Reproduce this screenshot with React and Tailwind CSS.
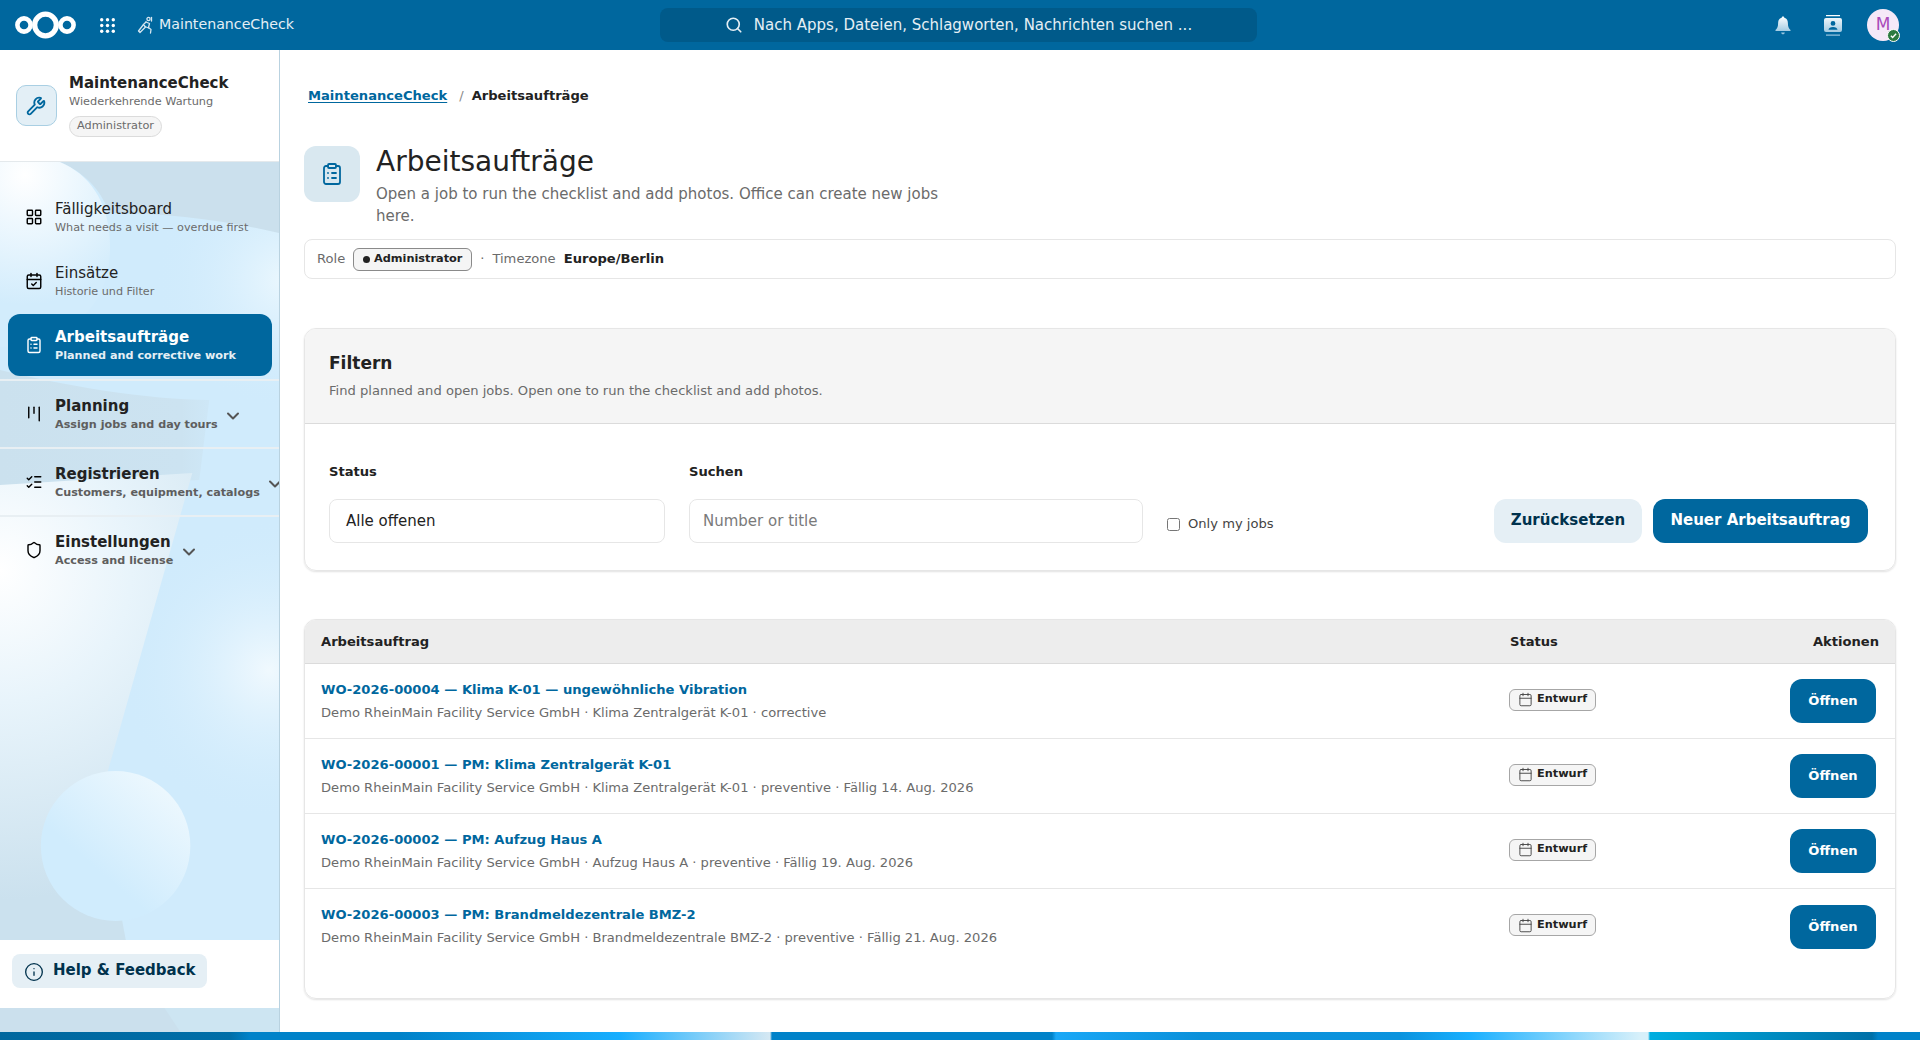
import { Calendar, CalendarCheck, ChevronDown, ClipboardList, Info, Kanban, LayoutGrid, ListChecks, Search, Shield, Wrench } from "lucide-react";

const rows = [
  { title: "WO-2026-00004 — Klima K-01 — ungewöhnliche Vibration", sub: "Demo RheinMain Facility Service GmbH · Klima Zentralgerät K-01 · corrective" },
  { title: "WO-2026-00001 — PM: Klima Zentralgerät K-01", sub: "Demo RheinMain Facility Service GmbH · Klima Zentralgerät K-01 · preventive · Fällig 14. Aug. 2026" },
  { title: "WO-2026-00002 — PM: Aufzug Haus A", sub: "Demo RheinMain Facility Service GmbH · Aufzug Haus A · preventive · Fällig 19. Aug. 2026" },
  { title: "WO-2026-00003 — PM: Brandmeldezentrale BMZ-2", sub: "Demo RheinMain Facility Service GmbH · Brandmeldezentrale BMZ-2 · preventive · Fällig 21. Aug. 2026" },
];

const Logo = () => (
  <svg width="62" height="28" viewBox="0 0 62 28" fill="none" stroke="white">
    <circle cx="9" cy="14" r="6.6" strokeWidth="4.6" />
    <circle cx="30.5" cy="14" r="10.8" strokeWidth="5.2" />
    <circle cx="52" cy="14" r="6.6" strokeWidth="4.6" />
  </svg>
);

const AppsGrid = () => (
  <svg width="15" height="15" viewBox="0 0 15 15" fill="white">
    {[1.7, 7.5, 13.3].map((y) =>
      [1.7, 7.5, 13.3].map((x) => <circle key={`${x}-${y}`} cx={x} cy={y} r="1.7" />)
    )}
  </svg>
);

const AppIcon = () => (
  <svg width="16" height="18" viewBox="0 0 16 18" fill="none" stroke="#d5e6f0" strokeWidth="1.3" strokeLinecap="round" strokeLinejoin="round">
    <circle cx="11.5" cy="3" r="1.6" />
    <path d="M14.5 1.5v3.5" />
    <path d="M9 6l3.5 1.5-1 4 2.5 2-.5 3.5" />
    <path d="M9 6l-2.5 2.5 1.5 2 3.5 1.5" />
    <path d="M6.5 8.5l-5 6.5 1.5 1.5 5.5-5.5" />
  </svg>
);

const Bell = () => (
  <svg width="18" height="19" viewBox="0 0 18 19">
    <defs>
      <linearGradient id="fadeBell" x1="0" y1="0" x2="0" y2="1">
        <stop offset="0" stopColor="#ffffff" />
        <stop offset="1" stopColor="#8fc0dc" />
      </linearGradient>
    </defs>
    <path fill="url(#fadeBell)" d="M9 0.5c.8 0 1.3.5 1.3 1.2 2.7.6 3.6 3 3.6 5.6 0 3.2.8 5.2 2.6 6.7v1H1.500v-1c1.800-1.500 2.600-3.500 2.600-6.700 0-2.600.9-5 3.600-5.600C7.700 1 8.200.5 9 .5zM7.200 16.500h3.600c0 1-.8 1.800-1.800 1.800s-1.800-.8-1.800-1.800z" />
  </svg>
);

const Contacts = () => (
  <svg width="18" height="21" viewBox="0 0 18 21">
    <defs>
      <linearGradient id="fadeCard" x1="0" y1="0" x2="0" y2="1">
        <stop offset="0" stopColor="#ffffff" />
        <stop offset="1" stopColor="#8fc0dc" />
      </linearGradient>
    </defs>
    <path fill="url(#fadeCard)" fillRule="evenodd" d="M2 0h14v1.300H2zM2 19.500h14v1.300H2zM2 3h14a2 2 0 0 1 2 2v10a2 2 0 0 1-2 2H2a2 2 0 0 1-2-2V5a2 2 0 0 1 2-2zm7 3a2.400 2.400 0 1 0 0 4.800A2.400 2.400 0 0 0 9 6zm-4.500 8.800h9c0-1.800-2-2.900-4.500-2.900s-4.500 1.100-4.500 2.900z" />
  </svg>
);

const SidebarArt = () => (
  <svg className="absolute inset-0 w-full h-full" viewBox="0 0 280 982" preserveAspectRatio="none" aria-hidden="true">
    <defs>
      <radialGradient id="glowTop" gradientUnits="userSpaceOnUse" cx="25" cy="125" r="130">
        <stop offset="0" stopColor="#ffffff" />
        <stop offset="1" stopColor="#d2ecfc" />
      </radialGradient>
      <radialGradient id="glowRight" gradientUnits="userSpaceOnUse" cx="270" cy="620" r="150">
        <stop offset="0" stopColor="#f0f9fe" />
        <stop offset="1" stopColor="#d0ebfc" stopOpacity="0" />
      </radialGradient>
      <radialGradient id="glowRightUp" gradientUnits="userSpaceOnUse" cx="285" cy="230" r="130">
        <stop offset="0" stopColor="#eaf7fe" />
        <stop offset="1" stopColor="#d0ebfc" stopOpacity="0" />
      </radialGradient>
      <radialGradient id="sheet" gradientUnits="userSpaceOnUse" cx="0" cy="520" r="330">
        <stop offset="0" stopColor="#ffffff" />
        <stop offset="0.4" stopColor="#e8f4fb" />
        <stop offset="1" stopColor="#cbe1ee" />
      </radialGradient>
      <linearGradient id="sphere" gradientUnits="userSpaceOnUse" x1="60" y1="860" x2="180" y2="720">
        <stop offset="0.3" stopColor="#d0ecfd" />
        <stop offset="1" stopColor="#f2fafe" />
      </linearGradient>
      <linearGradient id="band" gradientUnits="userSpaceOnUse" x1="0" y1="0" x2="280" y2="0">
        <stop offset="0" stopColor="#cbe1ee" />
        <stop offset="0.65" stopColor="#cce3f1" />
        <stop offset="1" stopColor="#d0ecfc" stopOpacity="0" />
      </linearGradient>
    </defs>
    <rect width="280" height="982" fill="#d0ebfc" />
    <rect width="280" height="982" fill="url(#glowRight)" />
    <rect width="280" height="982" fill="url(#glowRightUp)" />
    <path d="M0 112h280v71c-50-12-110-20-170-20-10-25-25-40-50-51H0z" fill="#cbe0ed" />
    <path d="M0 112h60c30 12 48 40 50 75 3 40-10 70-40 90-25 15-50 20-70 20z" fill="url(#glowTop)" />
    <path d="M0 320c60 15 150 30 210 30l-10 80-200 10z" fill="url(#band)" />
    <path d="M0 435l193-12-93 327 30 160H0z" fill="url(#sheet)" />
    <circle cx="116" cy="796" r="75" fill="url(#sphere)" />
    <path d="M0 880h118l62 102H0z" fill="#cbe1ee" />
    <rect y="958" width="280" height="24" fill="#cde5f2" />
    <path d="M0 958h165l16 24H0z" fill="#cbe0ed" />
  </svg>
);

const NavItem = ({ icon: Icon, title, sub, active, strong, chevron, className = "" }) => (
  <div
    className={`flex items-center ${active ? "bg-[#00679e] text-white rounded-[12px] mx-2 w-[264px] pl-[17px] font-bold" : "pl-[25px]"} ${className}`}
  >
    <Icon size={18} strokeWidth={1.9} className="shrink-0" />
    <div className="flex flex-col ml-[12px] shrink-0">
      <span className={`text-[15px] leading-[20px] ${strong || active ? "font-bold" : "text-[#222222]"} ${strong ? "text-[#222222]" : ""}`}>{title}</span>
      <span className={`text-[11.2px] leading-[15px] mt-[1px] whitespace-nowrap ${active ? "text-[#e5eff5] font-bold" : strong ? "text-[#5e5e5e] font-bold" : "text-[#6b6b6b]"}`}>{sub}</span>
    </div>
    {chevron && <ChevronDown size={20} strokeWidth={2.4} className={`shrink-0 mt-[4px] text-[#555555] ${chevron}`} />}
  </div>
);

const Sidebar = () => (
  <aside className="relative w-[280px] shrink-0 flex flex-col border-r border-[#b9d2e0] overflow-hidden">
    <SidebarArt />
    <div className="relative z-10 h-[112px] bg-white flex items-start pl-[16px] pt-[23px] border-b border-[#e4e9ec]">
      <div className="w-[41px] h-[41px] mt-[12px] rounded-[10px] bg-[#e3eff6] border border-[#a9cfe3] flex items-center justify-center text-[#00679e]">
        <Wrench size={20} strokeWidth={2.2} className="-ml-[1px]" />
      </div>
      <div className="ml-[12px] flex flex-col items-start">
        <span className="text-[15px] leading-[20px] font-bold text-[#222222]">MaintenanceCheck</span>
        <span className="text-[11.3px] leading-[16px] mt-[1px] text-[#6b6b6b]">Wiederkehrende Wartung</span>
        <span className="mt-[6px] h-[21px] px-[7px] flex items-center rounded-full bg-[#f5f5f5] border border-[#dbdbdb] text-[11.3px] text-[#6b6b6b]">Administrator</span>
      </div>
    </div>
    <div className="relative z-10 flex-1 flex flex-col pt-[23px]">
      <NavItem icon={LayoutGrid} title="Fälligkeitsboard" sub="What needs a visit — overdue first" className="h-[62px] mt-[1px]" />
      <NavItem icon={CalendarCheck} title="Einsätze" sub="Historie und Filter" className="h-[62px] mt-[2px]" />
      <NavItem icon={ClipboardList} active title="Arbeitsaufträge" sub="Planned and corrective work" className="h-[62px] mt-[2px]" />
      <div className="h-[2px] mt-[3px] bg-[#e8eff3]" />
      <NavItem icon={Kanban} strong title="Planning" sub="Assign jobs and day tours" chevron="ml-[5px]" className="h-[66px]" />
      <div className="h-[2px] bg-[#e8eff3]" />
      <NavItem icon={ListChecks} strong title="Registrieren" sub="Customers, equipment, catalogs" chevron="ml-[5px]" className="h-[66px]" />
      <div className="h-[2px] bg-[#e8eff3]" />
      <NavItem icon={Shield} strong title="Einstellungen" sub="Access and license" chevron="ml-[6px]" className="h-[66px]" />
    </div>
    <div className="relative z-10 h-[68px] mb-[24px] bg-white pt-[14px] pl-[12px]">
      <div className="w-[195px] h-[34px] rounded-[8px] bg-[#e5eff5] flex items-center pl-[12px] text-[#00324d]">
        <Info size={20} strokeWidth={1.6} className="mt-[2px]" />
        <span className="ml-[9px] text-[15px] font-bold -mt-[2px]">Help &amp; Feedback</span>
      </div>
    </div>
  </aside>
);

const Topbar = () => (
  <header className="h-[50px] shrink-0 bg-[#00679e] flex items-center relative text-white">
    <div className="ml-[15px]"><Logo /></div>
    <div className="ml-[23px]"><AppsGrid /></div>
    <div className="ml-[22px]"><AppIcon /></div>
    <span className="ml-[6px] text-[14.2px] text-[#e5eff5]">MaintenanceCheck</span>
    <div className="absolute left-[660px] top-[8px] w-[597px] h-[34px] rounded-[8px] bg-[#005a8a] flex items-center justify-center text-[#e5eff5]">
      <Search size={18} strokeWidth={2.2} />
      <span className="ml-[11px] text-[15px]">Nach Apps, Dateien, Schlagworten, Nachrichten suchen ...</span>
    </div>
    <div className="ml-auto flex items-center mr-[21px]">
      <Bell />
      <div className="ml-[32px]"><Contacts /></div>
      <div className="ml-[25px] relative w-[32px] h-[32px] rounded-full bg-[#f5e9f8] flex items-center justify-center text-[#a94bba] text-[17px]">
        M
        <span className="absolute -right-[1px] -bottom-[1px] w-[13px] h-[13px] rounded-full bg-[#2d7b41] border border-white flex items-center justify-center">
          <svg width="7" height="7" viewBox="0 0 8 8" fill="none" stroke="white" strokeWidth="1.6"><path d="M1 4.300l2 2 4-4.300" /></svg>
        </span>
      </div>
    </div>
  </header>
);

const StatusBadge = () => (
  <span className="inline-flex items-center mt-[1px] w-[87px] h-[22px] rounded-[6px] border border-[#a6a6a6] bg-[#f5f5f5] pl-[8px] text-[#222222]">
    <Calendar size={15} strokeWidth={1.5} className="shrink-0 text-[#444444]" />
    <span className="ml-[4px] text-[11.3px] font-bold">Entwurf</span>
  </span>
);

const Filters = () => (
  <section className="mt-[49px] rounded-[12px] border border-[#e6e6e6] shadow-[0_1px_2px_rgba(0,0,0,0.12)] overflow-hidden">
    <div className="h-[95px] bg-[#f5f5f5] border-b border-[#dbdbdb] pl-[24px] pt-[21px]">
      <h2 className="text-[17px] leading-[26px] font-bold text-[#222222]">Filtern</h2>
      <p className="mt-[6px] text-[13.1px] leading-[18px] text-[#6b6b6b]">Find planned and open jobs. Open one to run the checklist and add photos.</p>
    </div>
    <div className="h-[146px] flex items-start pl-[24px] pr-[27px] pt-[39px]">
      <div className="w-[336px]">
        <label className="block text-[13.1px] leading-[18px] font-bold text-[#222222]">Status</label>
        <div className="mt-[18px] h-[44px] rounded-[8px] border border-[#e6e6e6] flex items-center pl-[16px] text-[15px] text-[#222222]">Alle offenen</div>
      </div>
      <div className="ml-[24px] w-[454px]">
        <label className="block text-[13.1px] leading-[18px] font-bold text-[#222222]">Suchen</label>
        <div className="mt-[18px] h-[44px] rounded-[8px] border border-[#e6e6e6] flex items-center pl-[13px] text-[15px] text-[#7a7a7a]">Number or title</div>
      </div>
      <label className="ml-[24px] mt-[49px] flex items-center h-[24px]">
        <input type="checkbox" className="w-[13px] h-[13px] m-0" />
        <span className="ml-[8px] text-[13.1px] text-[#444444]">Only my jobs</span>
      </label>
      <button className="ml-auto mt-[36px] w-[148px] h-[44px] rounded-[12px] bg-[#e5eff5] text-[#00324d] text-[15px] font-bold pb-[1px]">Zurücksetzen</button>
      <button className="ml-[11px] mt-[36px] w-[215px] h-[44px] rounded-[12px] bg-[#00679e] text-white text-[15px] font-bold pb-[1px]">Neuer Arbeitsauftrag</button>
    </div>
  </section>
);

const JobsTable = () => (
  <section className="mt-[48px] h-[380px] rounded-[12px] border border-[#e6e6e6] shadow-[0_1px_2px_rgba(0,0,0,0.12)] overflow-hidden">
    <div className="h-[44px] bg-[#ededed] border-b border-[#dbdbdb] grid grid-cols-[1fr_185px_184px] items-center px-[16px] text-[13.1px] font-bold text-[#222222]">
      <span>Arbeitsauftrag</span>
      <span>Status</span>
      <span className="text-right">Aktionen</span>
    </div>
    {rows.map((row, i) => (
      <div key={row.title} className={`h-[75px] grid grid-cols-[1fr_185px_184px] items-center px-[16px] ${i < 3 ? "border-b border-[#e6e6e6]" : ""}`}>
        <div>
          <div className="text-[13.1px] leading-[18px] font-bold text-[#00679e]">{row.title}</div>
          <div className="mt-[5px] text-[13.1px] leading-[18px] text-[#6b6b6b]">{row.sub}</div>
        </div>
        <div className="-ml-[1px]"><StatusBadge /></div>
        <div className="flex justify-end pr-[3px]">
          <button className="w-[86px] h-[44px] rounded-[12px] bg-[#00679e] text-white text-[13.1px] font-bold">Öffnen</button>
        </div>
      </div>
    ))}
  </section>
);

export default function App() {
  return (
    <div className="h-screen flex flex-col overflow-hidden bg-white font-['DejaVu_Sans',sans-serif]">
      <Topbar />
      <div className="flex-1 flex min-h-0">
        <Sidebar />
        <main className="flex-1 pl-[24px] pr-[24px] pt-[37px] min-w-0">
          <nav className="flex items-center h-[18px] pl-[4px] text-[13.1px] font-bold">
            <a className="text-[#00679e] underline underline-offset-2" href="#">MaintenanceCheck</a>
            <span className="ml-[12px] font-normal text-[#8a8a8a]">/</span>
            <span className="ml-[8px] text-[#222222]">Arbeitsaufträge</span>
          </nav>
          <div className="mt-[41px] flex items-start">
            <div className="w-[56px] h-[56px] rounded-[12px] bg-[#d9e8f0] flex items-center justify-center text-[#00679e]">
              <ClipboardList size={24} strokeWidth={1.8} />
            </div>
            <div className="ml-[16px]">
              <h1 className="text-[28px] leading-[32px] text-[#222222]">Arbeitsaufträge</h1>
              <p className="mt-[5px] w-[600px] text-[15px] leading-[22px] text-[#6b6b6b]">Open a job to run the checklist and add photos. Office can create new jobs here.</p>
            </div>
          </div>
          <div className="mt-[12px] h-[40px] rounded-[8px] border border-[#e6e6e6] flex items-center pl-[12px] text-[13.1px] text-[#6b6b6b]">
            <span>Role</span>
            <span className="ml-[8px] w-[119px] h-[23px] rounded-[6px] border border-[#8a8a8a] bg-[#f5f5f5] flex items-center justify-center text-[11.3px] font-bold text-[#222222]">
              <span className="w-[7px] h-[7px] rounded-full bg-[#222222] mr-[4px]" />
              Administrator
            </span>
            <span className="ml-[8px]">·</span>
            <span className="ml-[8px]">Timezone</span>
            <span className="ml-[8px] font-bold text-[#222222]">Europe/Berlin</span>
          </div>
          <Filters />
          <JobsTable />
        </main>
      </div>
      <div className="h-[8px] shrink-0 bg-[linear-gradient(90deg,#00679e_0,#006ea8_230px,#0082c9_250px,#0082c9_400px,#17aeff_620px,#d5e8f3_770px,#0082c9_772px,#0082c9_1052px,#1aa8f7_1056px,#0a90da_1200px,#0a93de_1400px,#1ab0ff_1470px,#d7f0fa_1640px,#d7f0fa_1648px,#00aee0_1650px,#0070a8_1872px,#0082c9_1878px,#0082c9_1920px)]" />
    </div>
  );
}
